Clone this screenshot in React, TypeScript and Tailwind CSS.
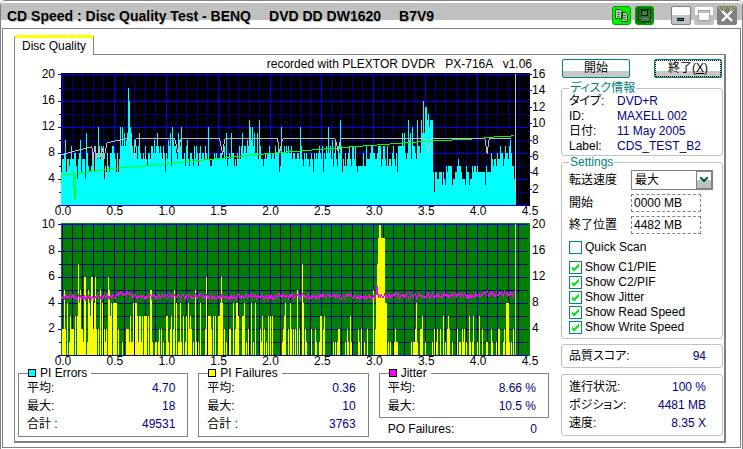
import React, { useState } from 'react';

// one character per sample, base 36
const PIE =
  '5778a57767977886478a57774b86556885987c979894658658899875857c9c9b9abigcb98a8979b8' +
  '7787976887998a89b9898798587a9b6ca9987ba9c77869a76887697986897887987c76677878777887797b6787b886768797' +
  '9b8998a9dcac9b88b7d977678788987887988956c8898989889798877887c97687877678758787898' +
  '7958798c897a68a7698d957686789769979656666686697778998877899967997696776897685999' +
  '9b9b878dab7c9987d998dbgbffdecddd525544555354365666634455676654443655344656656555555536555587677687798' +
  '86798879a86644532';

const PIF =
  '0225204013222030374522166015436624620205040212065340444402000100022213114044313313033303055100110120' +
  '20100331023025040114103013042320105101040000260333203030033464020100220040244300' +
  '033401020040104000021302010303030000000001234002042032020502007402100002000210013302300000000101012200' +
  '0001021031000000210200100200000502579aa99994401010001211000000000000010112410022' +
  '30010000001020120020030102320010000201102120100310130001030020001100021000102200' +
  '01204441010201010';

const barPath = (data: string, unit: number, base: number) =>
  data
    .slice(0, 456)
    .split('')
    .map((c, i) => {
      const h = Math.round(parseInt(c, 36) * unit);
      return h > 0 ? `M${25 + i} ${base}v${-h}h1v${h}z` : '';
    })
    .join('');

const jitterPath = () => {
  let seed = 7;
  let d = '';
  for (let i = 0; i < 454; i++) {
    seed = (seed * 16807) % 2147483647;
    const noise = (seed % 1000) / 1000 - 0.5;
    let y = 77;
    if (i > 11 && i < 40) y = 78;
    else if (i > 54 && i < 70) y = 74;
    else if (i > 420) y = 74;
    else if (i > 330) y = 76;
    const top = i === 316 || i === 317 ? 67 : Math.round(y + noise * 4) - 1;
    const h = i === 316 || i === 317 ? 9 : 2 + (seed % 3);
    d += `M${25 + i} ${top}h1v${h}h-1z`;
  }
  return d;
};

const X_LABELS = ['0.0', '0.5', '1.0', '1.5', '2.0', '2.5', '3.0', '3.5', '4.0', '4.5'];
const COLS = Array.from({ length: 46 }, (_, i) => i);
const ROWS = Array.from({ length: 11 }, (_, i) => i);
const colX = (i: number) => Math.round(25.5 + i * 10.4) + 0.5;

interface ChartProps {
  label: string;
  height: number;
  top: number;
  fill: string;
  minor: string;
  major: string;
  left: string[];
  right: string[];
  rightStep: number;
  rightTicks?: boolean;
  children: React.ReactNode;
}

const Chart: React.FC<ChartProps> = ({
  label, height, top, fill, minor, major, left, right, rightStep, rightTicks, children,
}) => (
  <svg
    viewBox={`0 0 514 ${height}`}
    className="block w-full overflow-visible font-['Liberation_Sans',sans-serif] text-xs"
    role="img"
    aria-label={label}
  >
    <g shapeRendering="crispEdges">
      <rect x="25" y={top - 1} width="470" height="133" fill={fill} />
      {COLS.filter((i) => i % 5 !== 0).map((i) => (
        <path key={i} d={`M${colX(i)} ${top}v131`} stroke={minor} />
      ))}
      {ROWS.filter((i) => i % 2 === 1).map((i) => (
        <path key={i} d={`M23 ${top + i * 13 + 1.5}h470`} stroke={minor} />
      ))}
      {COLS.filter((i) => i % 5 === 0 && i < 45).map((i) => (
        <path key={i} d={`M${colX(i)} ${top}v131`} stroke={major} />
      ))}
      {ROWS.filter((i) => i % 2 === 0).map((i) => (
        <path key={i} d={`M22 ${top + (i === 0 ? 0 : i * 13 + 1) + 0.5}h471`} stroke={i === 0 ? '#0000ff' : major} />
      ))}
      {rightTicks &&
        right.map((_, i) => (
          <path
            key={i}
            d={`M493 ${Math.round(top + i * rightStep) + 0.5}h4M493 ${Math.round(top + (i + 0.5) * rightStep) + 0.5}h2`}
            stroke="#0000ff"
          />
        ))}
      {children}
    </g>
    {left.map((t, i) => (
      <text key={t} x="19" y={top + 4 + i * 26} textAnchor="end">{t}</text>
    ))}
    {right.map((t, i) => (
      <text key={t} x="497" y={Math.round(top + 4 + i * rightStep)}>{t}</text>
    ))}
    {X_LABELS.map((t, i) => (
      <text key={t} x={Math.round(27 + i * 52)} y={top + 141} textAnchor="middle">{t}</text>
    ))}
  </svg>
);

interface StatProps {
  title: string;
  color: string;
  rows: [string, string][];
}

const StatBox: React.FC<StatProps> = ({ title, color, rows }) => (
  <fieldset className="border border-[#808080] px-2 pb-[2px]">
    <legend className="ml-px flex h-3 items-center gap-1 pr-1 leading-3">
      <span className={`size-2 border border-black ${color}`} />
      {title}
    </legend>
    {rows.map(([k, v]) => (
      <div key={k} className="flex h-[18px] items-center justify-between pr-1">
        <span>{k}</span>
        <span className="text-[#000080]">{v}</span>
      </div>
    ))}
  </fieldset>
);

const GROUP = 'rounded-[3px] border border-[#c0c0c0] pl-[7px]';

const INFO: [string, string][] = [
  ['タイプ:', 'DVD+R'],
  ['ID:', 'MAXELL 002'],
  ['日付:', '11 May 2005'],
  ['Label:', 'CDS_TEST_B2'],
];

const PROGRESS: [string, string][] = [
  ['進行状況:', '100 %'],
  ['ポジション:', '4481 MB'],
  ['速度:', '8.35 X'],
];

const CHECKS = ['Show C1/PIE', 'Show C2/PIF', 'Show Jitter', 'Show Read Speed', 'Show Write Speed'];

const CheckRow: React.FC<{ label: string; initial: boolean }> = ({ label, initial }) => {
  const [on, setOn] = useState(initial);
  return (
    <label className="flex h-[15px] items-center gap-[3px]">
      <span className="relative flex size-[13px]">
        <input
          type="checkbox"
          checked={on}
          onChange={(e) => setOn(e.target.checked)}
          className="size-[13px] appearance-none border border-[#008080] bg-white"
        />
        {on && (
          <svg viewBox="0 0 13 13" className="pointer-events-none absolute inset-0 size-[13px]">
            <path d="M3 5.5v3l2 2 5-5v-3l-5 5z" fill="#00e800" />
          </svg>
        )}
      </span>
      {label}
    </label>
  );
};

const PUSH =
  'flex h-[19px] w-[68px] items-center justify-center rounded-[2px] border border-[#008080] bg-linear-to-b from-white from-65% to-[#c8c8c8] to-65%';

export default function App() {
  const [speed, setSpeed] = useState('最大');
  const [start, setStart] = useState('0000 MB');
  const [end, setEnd] = useState('4482 MB');

  return (
    <div className="flex min-h-screen flex-col rounded-t-[5px] border border-[#808080] bg-white font-['Liberation_Sans','Noto_Sans_CJK_JP',sans-serif] text-xs leading-[15px] text-black [font-feature-settings:'palt']">
      {/* title bar */}
      <header className="flex h-[27px] items-center justify-between rounded-t-[4px] border-t-2 border-white bg-linear-to-b from-[#c0c0c0] from-[17px] to-white to-[17px] pr-[5px] pl-[6px]">
        <h1 className="flex gap-[18px] text-sm font-bold [text-shadow:1px_1px_0_#c0c0c0]">
          <span>CD Speed : Disc Quality Test - BENQ</span>
          <span>DVD DD DW1620</span>
          <span>B7V9</span>
        </h1>
        <div className="flex h-[19px] gap-1">
          <button aria-label="Copy" className="size-[19px] rounded-[3px] border border-[#00a000] bg-[#00f000]">
            <svg viewBox="0 0 17 17" className="size-[17px]" shapeRendering="crispEdges">
              <path d="M2.5 2.5h5l2 2v7h-7zM8.5 5.5h4l2 2v7h-6z" fill="#c0c0c0" stroke="#006000" />
              <path d="M4 5.5h3M4 7.5h3M4 9.5h3M10 8.5h3M10 10.5h3M10 12.5h3" stroke="#408040" />
            </svg>
          </button>
          <button aria-label="Save" className="size-[19px] rounded-[3px] border border-[#00a000] bg-[#008000]">
            <svg viewBox="0 0 17 17" className="size-[17px]" shapeRendering="crispEdges">
              <path d="M2.5 2.5h12v12h-10l-2-2z" fill="#307030" stroke="#003000" />
              <path d="M5.5 3.5h6v5h-6z" fill="#408040" stroke="#002000" />
              <path d="M6 11.5h6M6 13.5h2M10 13.5h2" stroke="#709070" />
              <path d="M13 16h1M15 14h1M16 16h1M11 16h1M15 12h1" stroke="#00ff00" />
            </svg>
          </button>
          <div className="ml-[13px] flex gap-[3px]">
            <button aria-label="Minimize" className="h-[19px] w-5 rounded-[2px] border border-[#808080] bg-linear-to-b from-white from-45% to-[#c0c0c0] to-45%">
              <svg viewBox="0 0 18 17" className="h-[17px] w-[18px]" shapeRendering="crispEdges">
                <path d="M5 12.5h7" stroke="#000" strokeWidth="3" />
                <path d="M5 12.5h6" stroke="#4080a0" />
              </svg>
            </button>
            <button aria-label="Maximize" className="h-[19px] w-5 rounded-[2px] border border-[#c0c0c0] bg-linear-to-b from-white from-45% to-[#c0c0c0] to-45%">
              <svg viewBox="0 0 18 17" className="h-[17px] w-[18px]" shapeRendering="crispEdges">
                <path d="M3.5 3.5h11v10h-11z" fill="#fff" stroke="#a0a0a0" />
                <path d="M4 5h10" stroke="#c0c0c0" strokeWidth="2" />
              </svg>
            </button>
            <button aria-label="Close" className="h-[19px] w-5 rounded-[2px] border border-[#808080] bg-[#808080]">
              <svg viewBox="0 0 18 17" className="h-[17px] w-[18px]">
                <path d="M1 1h1M4 0h1M7 1h1M10 0h1M13 1h1M16 0h1M2 3h1M15 3h1M5 2h1M12 2h1" stroke="#ffff00" />
                <path d="M4 4l10 10M14 4l-10 10" stroke="#fff" strokeWidth="2.4" />
              </svg>
            </button>
          </div>
        </div>
      </header>

      <main className="mx-px mb-px flex-1 border border-[#808080] pt-[6px] pr-[14px] pb-1 pl-[11px]">
        <div role="tablist" className="flex">
          <button
            role="tab"
            aria-selected="true"
            className="relative z-10 -mb-px h-5 rounded-t-[2px] border-x border-t-[3px] border-[#808080] border-t-[#ffff00] bg-white px-[7px] leading-[15px]"
          >
            Disc Quality
          </button>
        </div>

        <div className="flex gap-3 border border-r-2 border-b-2 border-[#808080] pt-1 pr-px pb-1 pl-[3px]">
          <section className="min-w-0 flex-1">
            <p className="h-[10px] pr-[17px] text-right leading-[10px] whitespace-pre">
              {'recorded with PLEXTOR DVDR   PX-716A   v1.06'}
            </p>
            <div className="pl-[18px]">
              <Chart
                label="PI Errors"
                height={150}
                top={5}
                fill="#000000"
                minor="#000080"
                major="#0000ff"
                left={['20', '16', '12', '8', '4']}
                right={['16', '14', '12', '10', '8', '6', '4', '2']}
                rightStep={16.4}
                rightTicks
              >
                <path d={barPath(PIE, 6.5, 136)} fill="#00ffff" />
                <polyline
                  points="25,114 26,106 38,105 38,118 39,131 40,105 60,102 83,99 110,97 140,94 170,91 200,88 230,85 254,83 290,80 330,77 370,74 400,72 440,70 460,68 479,67"
                  fill="none"
                  stroke="#00ff00"
                />
                <polyline
                  points="25,86 40,82 56,78 57,91 59,77 61,90 63,80 65,88 67,79 68,91 71,74 94,69 96,86 98,90 100,70 139,70 142,83 145,70 184,70 187,86 189,70 242,70 244,84 247,70 300,70 303,84 305,70 391,70 393,84 396,70 450,70 452,85 454,70 476,70"
                  fill="none"
                  stroke="#c0c0c0"
                />
                <path d="M480.5 5v117" stroke="#c0c0c0" />
              </Chart>
              <Chart
                label="PI Failures"
                height={149}
                top={5}
                fill="#008000"
                minor="#000080"
                major="#0000a0"
                left={['10', '8', '6', '4', '2']}
                right={['20', '16', '12', '8', '4']}
                rightStep={26}
              >
                <path d={barPath(PIF, 13, 136)} fill="#ffff00" />
                <path d={jitterPath()} fill="#ff00ff" />
                <path d="M480.5 5v131" stroke="#c0c0c0" />
              </Chart>
            </div>
            <div className="grid grid-cols-3 gap-[10px]">
              <StatBox
                title="PI Errors"
                color="bg-[#00ffff]"
                rows={[['平均:', '4.70'], ['最大:', '18'], ['合計 :', '49531']]}
              />
              <StatBox
                title="PI Failures"
                color="bg-[#ffff00]"
                rows={[['平均:', '0.36'], ['最大:', '10'], ['合計 :', '3763']]}
              />
              <div>
                <StatBox
                  title="Jitter"
                  color="bg-[#ff00ff]"
                  rows={[['平均:', '8.66 %'], ['最大:', '10.5 %']]}
                />
                <div className="flex justify-between pt-1 pr-3 pl-[9px]">
                  <span>PO Failures:</span>
                  <span className="text-[#000080]">0</span>
                </div>
              </div>
            </div>
          </section>

          <aside className="w-[162px] shrink-0">
            <div className="flex justify-between px-px">
              <button className={PUSH}>開始</button>
              <button className={`${PUSH} outline-1 -outline-offset-2 outline-dotted outline-black`}>
                終了(<u>X</u>)
              </button>
            </div>

            <fieldset className={`${GROUP} mt-1 pb-px`}>
              <legend className="h-3 px-px leading-3 text-[#008080]">ディスク情報</legend>
              <dl>
                {INFO.map(([k, v]) => (
                  <div key={k} className="flex h-[15px] items-center">
                    <dt className="w-12">{k}</dt>
                    <dd className="text-[#000080]">{v}</dd>
                  </div>
                ))}
              </dl>
            </fieldset>

            <fieldset className={`${GROUP} pb-[3px]`}>
              <legend className="h-3 px-px leading-3 text-[#008080]">Settings</legend>
              <div className="grid grid-cols-[62px_1fr] items-center gap-y-1 pt-[2px]">
                <label htmlFor="speed">転送速度</label>
                <span className="relative w-[82px]">
                  <select
                    id="speed"
                    value={speed}
                    onChange={(e) => setSpeed(e.target.value)}
                    className="block h-5 w-full appearance-none border border-[#808080] bg-white pl-[3px] leading-[15px]"
                  >
                    <option>最大</option>
                  </select>
                  <svg viewBox="0 0 16 18" className="pointer-events-none absolute top-px right-px h-[18px] w-4" shapeRendering="crispEdges">
                    <path d="M.5.5h15v17H.5z" fill="#fff" stroke="#808080" />
                    <path d="M1 9h14v8H1z" fill="#c0c0c0" />
                    <path d="M4 6h2v1h1v1h2V7h1V6h2v2h-1v1h-1v1H9v1H7v-1H6V9H5V8H4z" fill="#006840" />
                  </svg>
                </span>
                <label htmlFor="start">開始</label>
                <input
                  id="start"
                  value={start}
                  onChange={(e) => setStart(e.target.value)}
                  className="h-[18px] w-[70px] border border-dashed border-[#808080] px-[2px]"
                />
                <label htmlFor="end">終了位置</label>
                <input
                  id="end"
                  value={end}
                  onChange={(e) => setEnd(e.target.value)}
                  className="h-[18px] w-[70px] border border-dashed border-[#808080] px-[2px]"
                />
              </div>
              <div className="pt-[6px]">
                <CheckRow label="Quick Scan" initial={false} />
                <div className="pt-[5px]">
                  {CHECKS.map((c) => (
                    <CheckRow key={c} label={c} initial />
                  ))}
                </div>
              </div>
            </fieldset>

            <div className={`${GROUP} mt-[5px] flex h-6 items-center justify-between pr-4`}>
              <span>品質スコア:</span>
              <span className="text-[#000080]">94</span>
            </div>

            <div className={`${GROUP} mt-[6px] py-[3px] pr-4`}>
              {PROGRESS.map(([k, v]) => (
                <div key={k} className="flex h-[18px] items-center justify-between">
                  <span>{k}</span>
                  <span className="text-[#000080]">{v}</span>
                </div>
              ))}
            </div>
          </aside>
        </div>
      </main>
    </div>
  );
}
